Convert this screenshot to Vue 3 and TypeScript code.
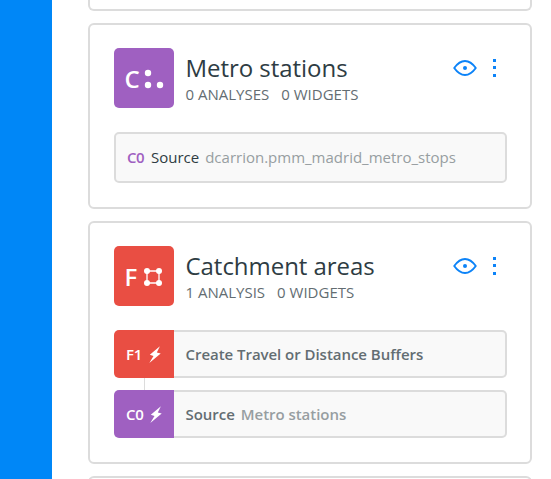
<script setup lang="ts">
interface AnalysisNode {
  id: string
  color: string
  label: string
  detail?: string
}

interface Layer {
  letter: string
  color: string
  geometry: 'points' | 'polygon'
  title: string
  analyses: string
  widgets: string
  source?: AnalysisNode
  nodes: AnalysisNode[]
}

const layers: Layer[] = [
  {
    letter: 'C',
    color: 'purple',
    geometry: 'points',
    title: 'Metro stations',
    analyses: '0 ANALYSES',
    widgets: '0 WIDGETS',
    source: { id: 'C0', color: 'purple', label: 'Source', detail: 'dcarrion.pmm_madrid_metro_stops' },
    nodes: [],
  },
  {
    letter: 'F',
    color: 'red',
    geometry: 'polygon',
    title: 'Catchment areas',
    analyses: '1 ANALYSIS',
    widgets: '0 WIDGETS',
    nodes: [
      { id: 'F1', color: 'red', label: 'Create Travel or Distance Buffers' },
      { id: 'C0', color: 'purple', label: 'Source', detail: 'Metro stations' },
    ],
  },
]
</script>

<template>
  <div class="editor">
    <nav class="rail"></nav>
    <main class="layers">
      <section class="card card-previous"></section>
      <section v-for="layer in layers" :key="layer.letter" class="card">
        <header class="header">
          <div class="tile" :class="layer.color">
            <span class="letter">{{ layer.letter }}</span>
            <svg v-if="layer.geometry === 'points'" width="20" height="20" viewBox="0 0 20 20" fill="#fff">
              <circle cx="4" cy="4" r="3.200" />
              <circle cx="4" cy="16" r="3.200" />
              <circle cx="16" cy="16" r="3.200" />
            </svg>
            <svg v-else width="18" height="18" viewBox="0 0 18 18" fill="#fff">
              <path d="M3 3H15V15H3Z" fill="none" stroke="#fff" stroke-width="1.300" />
              <circle cx="3" cy="3" r="3" />
              <circle cx="15" cy="3" r="3" />
              <circle cx="3" cy="15" r="3" />
              <circle cx="15" cy="15" r="3" />
            </svg>
          </div>
          <div class="heading">
            <h2>{{ layer.title }}</h2>
            <p><span>{{ layer.analyses }}</span><span>{{ layer.widgets }}</span></p>
          </div>
          <div class="actions">
            <svg width="24" height="16" viewBox="0 0 24 16">
              <path d="M1.200 8C4.600 3.300 8 1 12 1S19.400 3.300 22.800 8C19.400 12.700 16 15 12 15S4.600 12.700 1.200 8Z" fill="none" stroke="#0c83f8" stroke-width="1.900" stroke-linejoin="round" />
              <circle cx="12" cy="8" r="2" fill="#0c83f8" />
            </svg>
            <svg width="3" height="18" viewBox="0 0 3 18" fill="#0c83f8">
              <path d="M0 0H3V3H0ZM0 7H3V10H0ZM0 15H3V18H0Z" />
            </svg>
          </div>
        </header>
        <div v-if="layer.source" class="source">
          <b>{{ layer.source.id }}</b>
          <span>{{ layer.source.label }}</span>
          <span class="source-name">{{ layer.source.detail }}</span>
        </div>
        <ul v-else class="nodes">
          <li v-for="node in layer.nodes" :key="node.id" class="node">
            <div class="badge" :class="node.color">
              <span>{{ node.id }}</span>
              <svg width="12" height="17" viewBox="0 0 12 17" fill="#fff">
                <path d="M10.900 0.200L0.800 8.700L4.500 10L0.300 17L11.700 7.600L7.800 6.400Z" />
              </svg>
            </div>
            <div class="node-body">
              <span>{{ node.label }}</span>
              <span v-if="node.detail" class="muted">{{ node.detail }}</span>
            </div>
          </li>
        </ul>
      </section>
      <section class="card card-next"></section>
    </main>
  </div>
</template>

<style>
body {
  background: #fff;
  overflow: hidden;
}
</style>

<style scoped>
.editor {
  display: flex;
  height: 479px;
  overflow: hidden;
  font-family: "Open Sans", sans-serif;
  color: #2e3c43;
}
.rail {
  width: 52px;
  flex: none;
  background: #0087f7;
}
.layers {
  display: flex;
  flex-direction: column;
  gap: 12px;
  width: 444px;
  margin-left: 36px;
}
.card {
  box-sizing: border-box;
  flex: none;
  padding: 23px 23px 24px 24px;
  border: 2px solid #dcdcdc;
  border-radius: 6px;
}
.card-previous {
  height: 11px;
  padding: 0;
  border-top: 0;
  border-radius: 0 0 6px 6px;
}
.card-next {
  height: 60px;
}
.header {
  display: flex;
  height: 60px;
}
.tile {
  box-sizing: border-box;
  display: flex;
  align-items: center;
  width: 60px;
  height: 60px;
  flex: none;
  padding-top: 2px;
  border-radius: 5px;
  color: #fff;
}
.purple {
  background: #9f60c1;
}
.red {
  background: #e94e43;
}
.letter {
  width: 19px;
  margin-left: 10.5px;
  margin-right: 0.5px;
  font-size: 24px;
  font-weight: 600;
  line-height: 30px;
}
.heading {
  flex: 1;
  margin-left: 11.5px;
}
h2 {
  margin: 4px 0 0;
  font-size: 24px;
  font-weight: 400;
  line-height: 32px;
  letter-spacing: -0.04px;
}
p {
  display: flex;
  gap: 12px;
  margin: 0;
  font-size: 15px;
  line-height: 21px;
  color: #636d72;
}
.actions {
  display: flex;
  align-items: center;
  gap: 16px;
  height: 40px;
  margin-right: 11px;
}
.source {
  box-sizing: border-box;
  display: flex;
  align-items: center;
  gap: 6px;
  height: 51px;
  margin-top: 24px;
  padding: 0 0 2px 11px;
  border: 2px solid #dcdcdc;
  border-radius: 5px;
  background: #f9f9f9;
  font-size: 15px;
}
.source b {
  width: 18px;
  font-weight: 600;
  letter-spacing: -0.4px;
  color: #9f60c1;
}
.source-name {
  color: #979ea1;
}
.nodes {
  display: flex;
  flex-direction: column;
  gap: 12px;
  margin: 24px 0 0;
  padding: 0;
  list-style: none;
}
.node {
  position: relative;
  display: flex;
  height: 48px;
}
.node + .node::before {
  content: "";
  position: absolute;
  top: -12px;
  left: 30px;
  width: 1px;
  height: 12px;
  background: #dcdcdc;
}
.badge {
  box-sizing: border-box;
  display: flex;
  align-items: center;
  gap: 7px;
  width: 60px;
  padding-left: 12px;
  border-radius: 5px 0 0 5px;
  color: #fff;
  font-size: 15px;
  font-weight: 600;
  letter-spacing: -0.3px;
}
.node-body {
  box-sizing: border-box;
  display: flex;
  flex: 1;
  align-items: center;
  gap: 6px;
  padding-left: 11.5px;
  border: 2px solid #dcdcdc;
  border-left: 0;
  border-radius: 0 5px 5px 0;
  background: #f9f9f9;
  color: #636d72;
  font-size: 15px;
  font-weight: 600;
  letter-spacing: -0.04px;
}
.muted {
  color: #979ea1;
}
</style>
